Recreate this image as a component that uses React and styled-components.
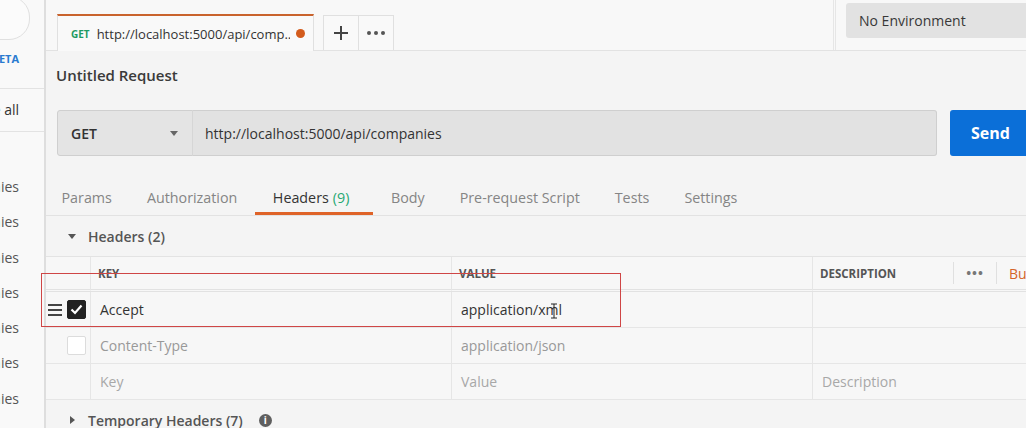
import React from 'react'
import styled, { createGlobalStyle } from 'styled-components'

const Global = createGlobalStyle`
  html, body { margin: 0; padding: 0; }
  body {
    font-family: "Open Sans", "Liberation Sans", sans-serif;
    background: #f4f4f4;
  }
`

const Page = styled.div`
  position: relative;
  display: flex;
  width: 1026px;
  height: 428px;
  overflow: hidden;
  background: #f4f4f4;
`

/* ---------- sidebar (clipped on the left) ---------- */
const Sidebar = styled.div`
  width: 44px;
  flex-shrink: 0;
  display: flex;
  justify-content: flex-end;
  overflow: hidden;
  background: #f9f9f9;
  border-right: 2px solid #dedede;
`
const SideInner = styled.div`
  width: 260px;
  flex-shrink: 0;
  display: flex;
  flex-direction: column;
  & > * { flex-shrink: 0; }
`
const SearchBox = styled.div`
  margin: -4px 14px 0 20px;
  height: 42px;
  border: 1px solid #e0e0e0;
  border-radius: 21px;
  background: #fbfbfb;
`
const Beta = styled.div`
  margin-top: 11px;
  height: 16px;
  padding-right: 25px;
  text-align: right;
  font-size: 11px;
  font-weight: 700;
  color: #2a7bd0;
  line-height: 16px;
`
const SideRule = styled.div`
  height: 1px;
  background: #e3e3e3;
  margin-top: ${p => p.$top}px;
`
const SideLink = styled.div`
  height: 42px;
  line-height: 42px;
  padding-right: 25px;
  text-align: right;
  font-size: 14px;
  color: #333;
`
const SideList = styled.div`
  padding-top: 37px;
  display: flex;
  flex-direction: column;
`
const SideItem = styled.div`
  height: 35.3px;
  line-height: 35px;
  padding-right: 25px;
  text-align: right;
  font-size: 14px;
  color: #555;
`

/* ---------- main ---------- */
const Main = styled.div`
  flex: 1;
  min-width: 0;
  display: flex;
  flex-direction: column;
  & > * { flex-shrink: 0; }
`
const TabBar = styled.div`
  height: 50px;
  display: flex;
  align-items: flex-end;
  padding-left: 11px;
  background: #f8f8f8;
  border-bottom: 1px solid #e2e2e2;
`
const ReqTab = styled.div`
  width: 257px;
  height: 37px;
  box-sizing: border-box;
  display: flex;
  align-items: center;
  padding: 0 8px 0 13px;
  border-top: 2px solid #c9632d;
  border-left: 1px solid #e0e0e0;
  border-right: 1px solid #e0e0e0;
  background: #f9f9f9;
  margin-bottom: -1px;
`
const Method = styled.span`
  font-size: 10px;
  font-weight: 700;
  color: #1d9a63;
  margin-right: 7px;
`
const TabUrl = styled.span`
  flex: 1;
  font-size: 13px;
  color: #333;
  white-space: nowrap;
  overflow: hidden;
`
const Dot = styled.span`
  width: 9px;
  height: 9px;
  border-radius: 50%;
  background: #d35b1c;
  margin-left: 6px;
`
const IconBtn = styled.div`
  width: 34px;
  height: 34px;
  display: flex;
  align-items: center;
  justify-content: center;
  border: 1px solid #e0e0e0;
  border-bottom: none;
  margin-left: ${p => (p.$first ? '9px' : '-1px')};
  color: #555;
  background: #f9f9f9;
`
const BarFill = styled.div`
  flex: 1;
  align-self: stretch;
  border-right: 3px double #e6e6e6;
`
const EnvSelect = styled.div`
  flex-shrink: 0;
  align-self: flex-start;
  margin: 3px 0 0 10px;
  width: 180px;
  height: 35px;
  box-sizing: border-box;
  border-radius: 3px 0 0 3px;
  background: #e2e2e2;
  display: flex;
  align-items: center;
  padding-left: 13px;
  font-size: 14px;
  color: #383838;
`

const Title = styled.div`
  height: 48px;
  display: flex;
  align-items: center;
  padding-left: 10px;
  font-size: 15px;
  font-weight: 600;
  color: #3a3a3a;
`
const UrlRow = styled.div`
  display: flex;
  height: 46px;
  margin: 11px 0 0 11px;
`
const MethodSelect = styled.div`
  width: 136px;
  box-sizing: border-box;
  display: flex;
  align-items: center;
  justify-content: space-between;
  padding: 0 14px 0 13px;
  background: #e4e4e4;
  border: 1px solid #cfcfcf;
  border-radius: 3px 0 0 3px;
  font-size: 14px;
  font-weight: 600;
  color: #333;
`
const Caret = styled.span`
  width: 0;
  height: 0;
  border-left: 4px solid transparent;
  border-right: 4px solid transparent;
  border-top: 5px solid #666;
`
const UrlInput = styled.div`
  flex: 1;
  display: flex;
  align-items: center;
  padding-left: 12px;
  background: #e2e2e2;
  border: 1px solid #cfcfcf;
  border-left: 1px solid #d6d6d6;
  border-radius: 0 3px 3px 0;
  margin-left: -1px;
  font-size: 14px;
  color: #333;
`
const SendBtn = styled.div`
  width: 100px;
  flex-shrink: 0;
  margin-left: 13px;
  display: flex;
  align-items: center;
  padding-left: 21px;
  box-sizing: border-box;
  background: #0b6fd8;
  border-radius: 3px 0 0 3px;
  color: #fff;
  font-size: 16px;
  font-weight: 700;
  margin-right: -24px;
`
const TabsRow = styled.div`
  display: flex;
  height: 35px;
  margin-top: 24px;
  border-bottom: 1px solid #e2e2e2;
`
const Tab = styled.div`
  display: flex;
  align-items: center;
  padding: 0 ${p => (p.$active ? '24px 0 18px' : '17.5px')};
  font-size: 14.3px;
  color: ${p => (p.$active ? '#333' : '#858585')};
  box-shadow: ${p => (p.$active ? 'inset 0 -3px 0 #df6328' : 'none')};
  &:first-child { margin-left: -2px; }
`
const Count = styled.span`
  color: #26a872;
  margin-left: 4px;
`

const SectionHead = styled.div`
  height: 40px;
  display: flex;
  align-items: center;
  padding-left: 22px;
  font-size: 14px;
  font-weight: 600;
  color: #555;
  gap: ${p => (p.$wide ? '13px' : '12px')};
`
const Tri = styled.span`
  width: 0;
  height: 0;
  ${p =>
    p.$open
      ? `border-left: 4px solid transparent; border-right: 4px solid transparent; border-top: 5px solid #555;`
      : `border-top: 4px solid transparent; border-bottom: 4px solid transparent; border-left: 5px solid #555; margin-left: 2px;`}
`
const Info = styled.span`
  width: 13px;
  height: 13px;
  border-radius: 50%;
  background: #5f5f5f;
  color: #fff;
  font-size: 10px;
  font-weight: 700;
  display: flex;
  align-items: center;
  justify-content: center;
  margin-left: 3px;
`

const Table = styled.div`
  display: grid;
  grid-template-columns: 45px 361px 361px 1fr;
  border-top: 1px solid #e3e3e3;
  background: #f7f7f7;
`
const Cell = styled.div`
  height: ${p => (p.$head ? '32px' : '35px')};
  display: flex;
  align-items: center;
  padding-left: ${p => (p.$head ? '7px' : '9px')};
  border-right: ${p => (p.$last ? 'none' : '1px solid #e6e6e6')};
  border-bottom: ${p => (p.$head ? '3px double #e2e2e2' : '1px solid #e6e6e6')};
  font-size: ${p => (p.$head ? '11.5px' : '14px')};
  font-weight: ${p => (p.$head ? 700 : 400)};
  color: ${p => p.$color || '#333'};
  white-space: nowrap;
  overflow: hidden;
  & > * { flex-shrink: 0; }
`
const CtrlCell = styled(Cell)`
  padding-left: 2px;
  gap: 5px;
`
const Handle = styled.span`
  width: 14px;
  display: flex;
  flex-direction: column;
  gap: 3px;
  & > i {
    display: block;
    height: 2px;
    background: #444;
  }
`
const Check = styled.span`
  width: 19px;
  height: 19px;
  box-sizing: border-box;
  border-radius: 2px;
  margin-left: ${p => (p.$checked ? '0' : '19px')};
  background: ${p => (p.$checked ? '#222' : '#fff')};
  border: 1px solid ${p => (p.$checked ? '#222' : '#dcdcdc')};
  display: flex;
  align-items: center;
  justify-content: center;
`
const DescLabel = styled.span`
  width: 133px;
`
const HeadSep = styled.span`
  width: 1px;
  align-self: stretch;
  margin: 5px 0;
  background: #e0e0e0;
`
const More = styled.span`
  width: 42px;
  text-align: center;
  color: #777;
  font-size: 13px;
  letter-spacing: 1px;
`
const Bulk = styled.span`
  margin-left: 12px;
  font-size: 14px;
  font-weight: 400;
  color: #d5652a;
`

const Highlight = styled.div`
  position: absolute;
  left: 41px;
  top: 273px;
  width: 578px;
  height: 52px;
  border: 1px solid #cf4646;
  pointer-events: none;
`
const Cursor = styled.svg`
  position: absolute;
  left: 550px;
  top: 303px;
`

const DotsIcon = () => (
  <svg width="18" height="4" viewBox="0 0 18 4">
    <circle cx="2" cy="2" r="2" fill="#555" />
    <circle cx="9" cy="2" r="2" fill="#555" />
    <circle cx="16" cy="2" r="2" fill="#555" />
  </svg>
)

const sideItems = ['companies', 'companies', 'companies', 'companies', 'companies', 'companies', 'companies']

export default function App() {
  return (
    <Page>
      <Global />
      <Sidebar>
        <SideInner>
          <SearchBox />
          <Beta>BETA</Beta>
          <SideRule $top={21} />
          <SideLink>Collapse all</SideLink>
          <SideRule $top={0} />
          <SideList>
            {sideItems.map((t, i) => (
              <SideItem key={i}>GET {t}</SideItem>
            ))}
          </SideList>
        </SideInner>
      </Sidebar>

      <Main>
        <TabBar>
          <ReqTab>
            <Method>GET</Method>
            <TabUrl>http://localhost:5000/api/comp...</TabUrl>
            <Dot />
          </ReqTab>
          <IconBtn $first>
            <svg width="16" height="16" viewBox="0 0 16 16">
              <path d="M8 1v14M1 8h14" stroke="#444" strokeWidth="2" />
            </svg>
          </IconBtn>
          <IconBtn>
            <DotsIcon />
          </IconBtn>
          <BarFill />
          <EnvSelect>No Environment</EnvSelect>
        </TabBar>

        <Title>Untitled Request</Title>

        <UrlRow>
          <MethodSelect>
            GET
            <Caret />
          </MethodSelect>
          <UrlInput>http://localhost:5000/api/companies</UrlInput>
          <SendBtn>Send</SendBtn>
        </UrlRow>

        <TabsRow>
          <Tab>Params</Tab>
          <Tab>Authorization</Tab>
          <Tab $active>
            Headers<Count>(9)</Count>
          </Tab>
          <Tab>Body</Tab>
          <Tab>Pre-request Script</Tab>
          <Tab>Tests</Tab>
          <Tab>Settings</Tab>
        </TabsRow>

        <SectionHead>
          <Tri $open />
          Headers (2)
        </SectionHead>

        <Table>
          <Cell $head />
          <Cell $head $color="#555">KEY</Cell>
          <Cell $head $color="#555">VALUE</Cell>
          <Cell $head $last $color="#555">
            <DescLabel>DESCRIPTION</DescLabel>
            <HeadSep />
            <More>•••</More>
            <HeadSep />
            <Bulk>Bulk Edit</Bulk>
          </Cell>

          <CtrlCell>
            <Handle>
              <i />
              <i />
              <i />
            </Handle>
            <Check $checked>
              <svg width="13" height="11" viewBox="0 0 13 11">
                <path d="M1.5 5.5l3.5 3.5 6.5-7.5" fill="none" stroke="#fff" strokeWidth="2.2" />
              </svg>
            </Check>
          </CtrlCell>
          <Cell>Accept</Cell>
          <Cell>application/xml</Cell>
          <Cell $last />

          <CtrlCell>
            <Check />
          </CtrlCell>
          <Cell $color="#999">Content-Type</Cell>
          <Cell $color="#999">application/json</Cell>
          <Cell $last />

          <CtrlCell />
          <Cell $color="#a8a8a8">Key</Cell>
          <Cell $color="#a8a8a8">Value</Cell>
          <Cell $last $color="#a8a8a8">Description</Cell>
        </Table>

        <SectionHead $wide>
          <Tri />
          Temporary Headers (7)
          <Info>i</Info>
        </SectionHead>
      </Main>

      <Highlight />
      <Cursor width="8" height="16" viewBox="0 0 8 16">
        <path d="M1 1h6M4 1v14M1 15h6" stroke="#222" strokeWidth="1" fill="none" />
      </Cursor>
    </Page>
  )
}
